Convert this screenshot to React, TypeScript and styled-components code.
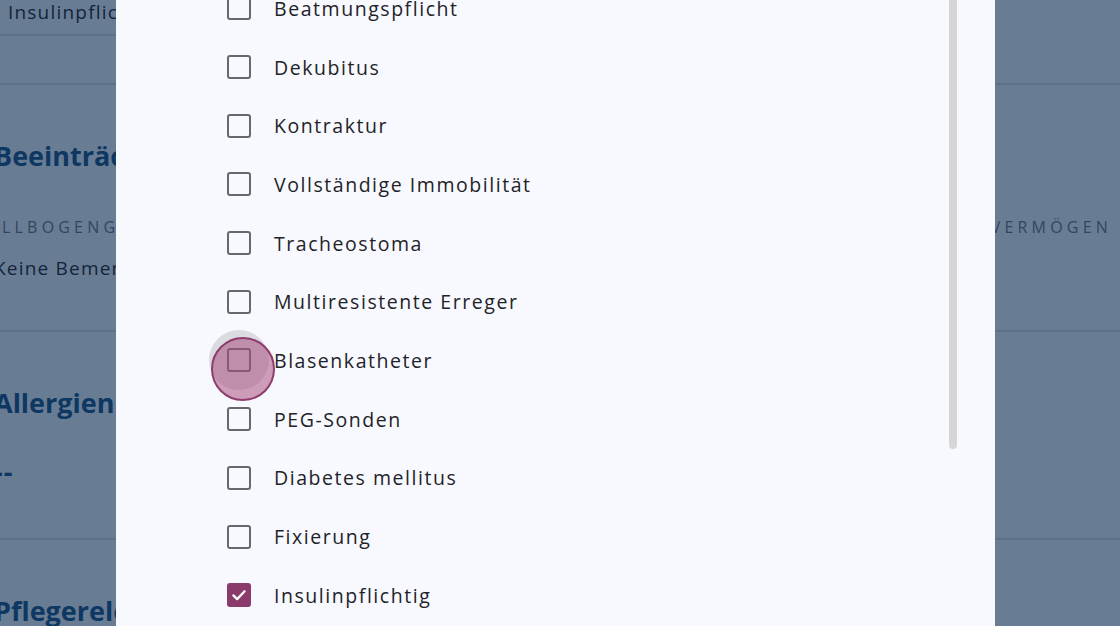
import React from 'react';
import styled, { createGlobalStyle } from 'styled-components';

const GlobalStyle = createGlobalStyle`
  html, body {
    margin: 0;
    padding: 0;
    width: 1120px;
    height: 626px;
    overflow: hidden;
    background: #687d94;
    font-family: 'Open Sans', 'Liberation Sans', sans-serif;
  }
`;

const Page = styled.div`
  position: relative;
  width: 1120px;
  height: 626px;
  overflow: hidden;
  background: #687d94;
  color: #0e3761;
`;

const Content = styled.div`
  display: flex;
  flex-direction: column;
  margin-left: -6px;
  width: 1130px;
  margin-top: -10px;
`;

const TopRow = styled.div`
  height: 46px;
  width: 620px;
  padding-left: 14px;
  box-sizing: border-box;
  display: flex;
  align-items: center;
  border-bottom: 2px solid #5d7189;
  font-size: 19px;
  letter-spacing: 1.2px;
  color: #13243a;
`;

const Spacer = styled.div`
  height: 47px;
  border-bottom: 2px solid #5d7189;
`;

const Section = styled.section<{ $height: number; $last?: boolean }>`
  height: ${(p) => p.$height}px;
  box-sizing: border-box;
  border-bottom: ${(p) => (p.$last ? 'none' : '2px solid #5d7189')};
  padding-top: 53px;
  display: flex;
  flex-direction: column;
`;

const Heading = styled.h2`
  margin: 0;
  font-size: 27px;
  font-weight: 700;
  color: #0e3761;
  line-height: 36px;
`;

const LabelRow = styled.div`
  display: flex;
  justify-content: space-between;
  margin-top: 42px;
  font-size: 16px;
  letter-spacing: 4.2px;
  color: #33465d;
  padding-right: 12px;
`;

const Label = styled.span`
  margin-left: 8px;
`;

const Value = styled.div`
  margin-top: 17px;
  font-size: 19px;
  letter-spacing: 1.2px;
  color: #13243a;
`;

const Empty = styled.div`
  margin-top: 32px;
  font-size: 27px;
  font-weight: 700;
  letter-spacing: 1px;
  color: #0e3761;
`;

const Modal = styled.div`
  position: absolute;
  top: 0;
  left: 116px;
  width: 879px;
  height: 626px;
  background: #f7f9fe;
  overflow: hidden;
  display: flex;
`;

const List = styled.ul`
  list-style: none;
  margin: -21px 0 0 0;
  padding: 0 0 0 111px;
  flex: 1;
  display: flex;
  flex-direction: column;
`;

const Row = styled.li`
  height: 58.7px;
  display: flex;
  align-items: center;
  gap: 23px;
  font-size: 19.5px;
  letter-spacing: 1.55px;
  color: #1f2328;
  position: relative;
`;

const Box = styled.span<{ $checked?: boolean }>`
  width: 24px;
  height: 24px;
  box-sizing: border-box;
  border-radius: 3px;
  border: ${(p) => (p.$checked ? 'none' : '2.5px solid #68686b')};
  background: ${(p) => (p.$checked ? '#8a3a6b' : 'transparent')};
  display: flex;
  align-items: center;
  justify-content: center;
  flex-shrink: 0;
`;

const Scrollbar = styled.div`
  width: 8px;
  height: 449px;
  margin-right: 38px;
  background: #d6d6d8;
  border-radius: 0 0 4px 4px;
`;

const Ripple = styled.span`
  position: absolute;
  left: -18px;
  top: -1px;
  width: 60px;
  height: 60px;
  border-radius: 50%;
  background: rgba(120, 120, 125, 0.22);
  pointer-events: none;
`;

const Touch = styled.span`
  position: absolute;
  left: -16px;
  top: 6px;
  width: 64px;
  height: 64px;
  box-sizing: border-box;
  border-radius: 50%;
  background: rgba(166, 70, 118, 0.52);
  border: 2.5px solid #8e3b6d;
  pointer-events: none;
`;

const items = [
  'Beatmungspflicht',
  'Dekubitus',
  'Kontraktur',
  'Vollständige Immobilität',
  'Tracheostoma',
  'Multiresistente Erreger',
  'Blasenkatheter',
  'PEG-Sonden',
  'Diabetes mellitus',
  'Fixierung',
  'Insulinpflichtig',
];

const Check = () => (
  <svg width="18" height="18" viewBox="0 0 24 24" fill="none" stroke="#fff" strokeWidth="3" strokeLinecap="round" strokeLinejoin="round">
    <path d="M4.5 12.5l5 5L19.5 7" />
  </svg>
);

export default function App() {
  return (
    <>
      <GlobalStyle />
      <Page>
        <Content>
          <TopRow>Insulinpflichtig</TopRow>
          <Spacer />
          <Section $height={247}>
            <Heading>Beeinträchtigungen</Heading>
            <LabelRow>
              <Label>LLBOGENGELENK</Label>
              <span>VERMÖGEN</span>
            </LabelRow>
            <Value>Keine Bemerkungen</Value>
          </Section>
          <Section $height={208}>
            <Heading>Allergien</Heading>
            <Empty>--</Empty>
          </Section>
          <Section $height={120} $last>
            <Heading>Pflegerelevante Informationen</Heading>
          </Section>
        </Content>
        <Modal>
          <List>
            {items.map((label) => (
              <Row key={label}>
                {label === 'Blasenkatheter' && <Ripple />}
                <Box $checked={label === 'Insulinpflichtig'}>
                  {label === 'Insulinpflichtig' && <Check />}
                </Box>
                <span>{label}</span>
                {label === 'Blasenkatheter' && <Touch />}
              </Row>
            ))}
          </List>
          <Scrollbar />
        </Modal>
      </Page>
    </>
  );
}
